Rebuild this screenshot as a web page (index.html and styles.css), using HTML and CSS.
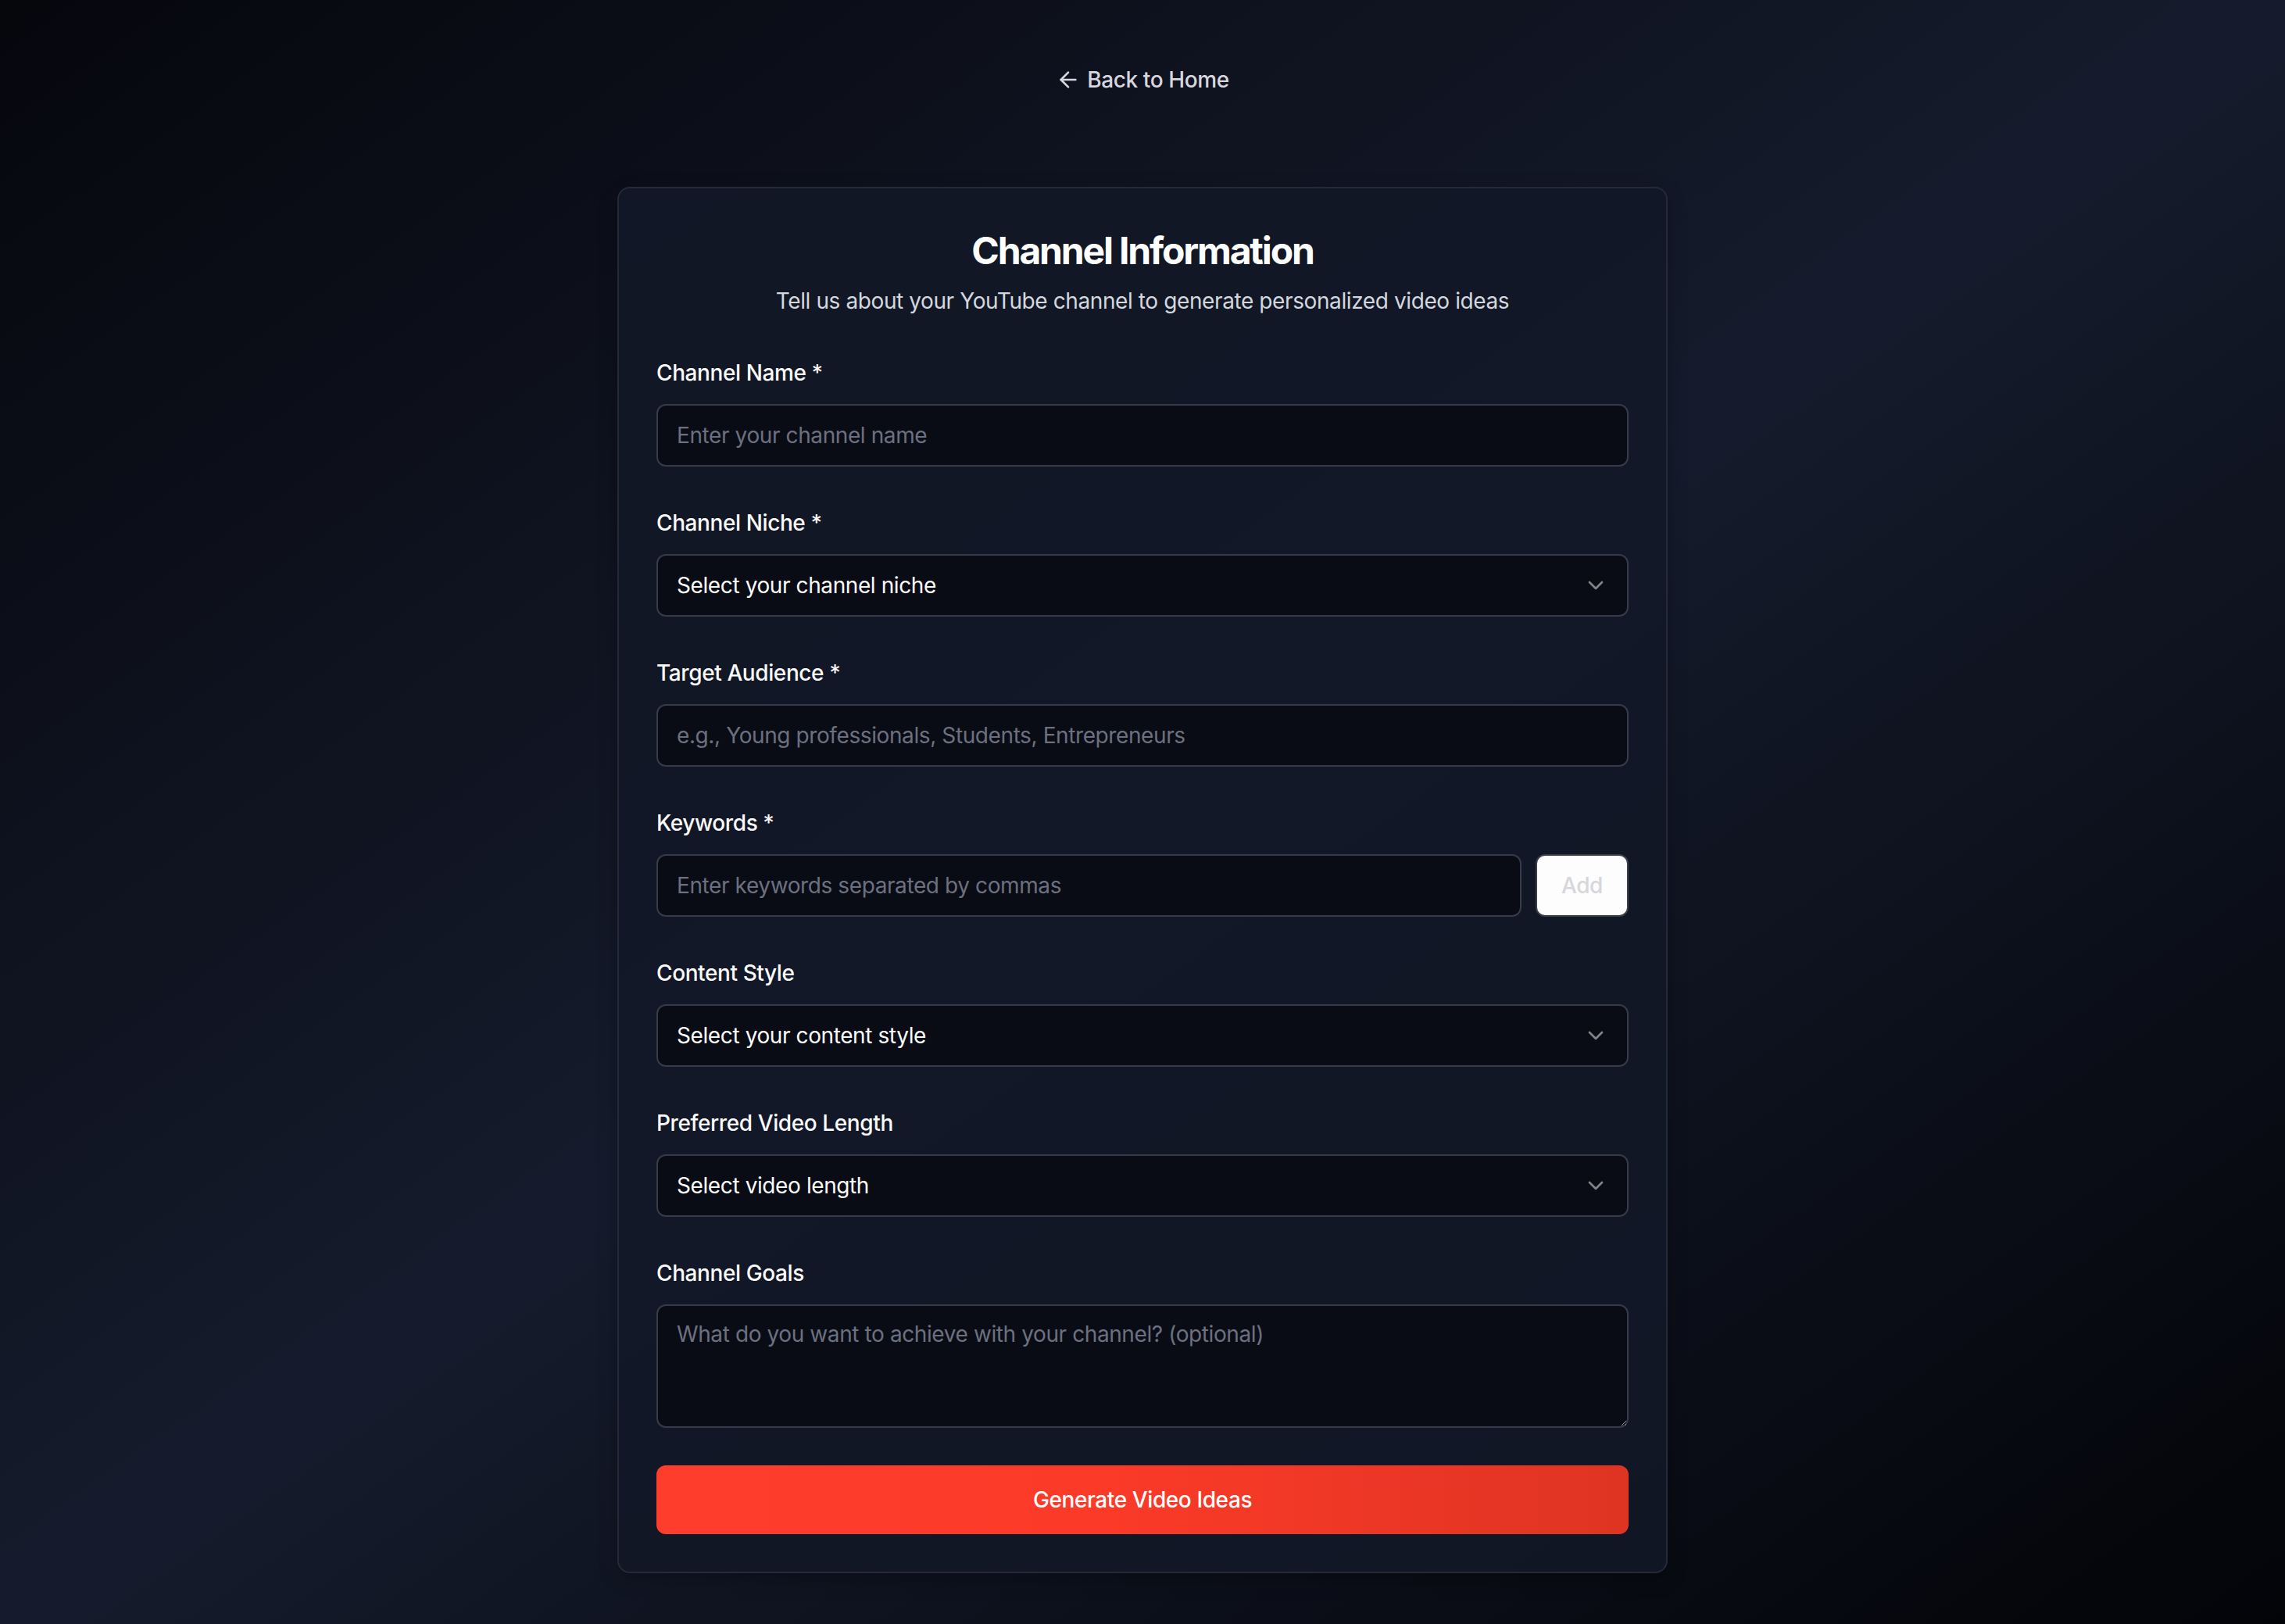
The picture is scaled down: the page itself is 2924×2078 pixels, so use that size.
FILE: index.html
```html
<!DOCTYPE html>
<html lang="en">
<head>
    <meta charset="UTF-8">
    <meta name="viewport" content="width=device-width, initial-scale=1.0">
    <title>Channel Information</title>
    <link rel="stylesheet" href="styles.css">
</head>
<body>
    <div class="page">
        <a class="back-link" href="#">
            <svg class="back-icon" viewBox="0 0 24 24" fill="none" stroke="currentColor" stroke-width="2" stroke-linecap="round" stroke-linejoin="round">
                <path d="m12 19-7-7 7-7"/>
                <path d="M19 12H5"/>
            </svg>
            Back to Home
        </a>

        <div class="card">
            <div class="card-header">
                <h1 class="card-title">Channel Information</h1>
                <p class="card-desc">Tell us about your YouTube channel to generate personalized video ideas</p>
            </div>

            <form class="form" onsubmit="return false">
                <div class="field">
                    <label class="label" for="channelName">Channel Name *</label>
                    <input class="input" id="channelName" placeholder="Enter your channel name">
                </div>

                <div class="field">
                    <label class="label">Channel Niche *</label>
                    <button type="button" class="input select">
                        <span>Select your channel niche</span>
                        <svg class="chevron" viewBox="0 0 24 24" fill="none" stroke="currentColor" stroke-width="2" stroke-linecap="round" stroke-linejoin="round"><path d="m6 9 6 6 6-6"/></svg>
                    </button>
                </div>

                <div class="field">
                    <label class="label" for="audience">Target Audience *</label>
                    <input class="input" id="audience" placeholder="e.g., Young professionals, Students, Entrepreneurs">
                </div>

                <div class="field">
                    <label class="label" for="keywords">Keywords *</label>
                    <div class="keyword-row">
                        <input class="input" id="keywords" placeholder="Enter keywords separated by commas">
                        <button type="button" class="add-btn" disabled>Add</button>
                    </div>
                </div>

                <div class="field">
                    <label class="label">Content Style</label>
                    <button type="button" class="input select">
                        <span>Select your content style</span>
                        <svg class="chevron" viewBox="0 0 24 24" fill="none" stroke="currentColor" stroke-width="2" stroke-linecap="round" stroke-linejoin="round"><path d="m6 9 6 6 6-6"/></svg>
                    </button>
                </div>

                <div class="field">
                    <label class="label">Preferred Video Length</label>
                    <button type="button" class="input select">
                        <span>Select video length</span>
                        <svg class="chevron" viewBox="0 0 24 24" fill="none" stroke="currentColor" stroke-width="2" stroke-linecap="round" stroke-linejoin="round"><path d="m6 9 6 6 6-6"/></svg>
                    </button>
                </div>

                <div class="field">
                    <label class="label" for="goals">Channel Goals</label>
                    <textarea class="input textarea" id="goals" placeholder="What do you want to achieve with your channel? (optional)"></textarea>
                </div>

                <button type="submit" class="submit-btn">Generate Video Ideas</button>
            </form>
        </div>
    </div>
</body>
</html>
```

FILE: styles.css
```css
* {
    box-sizing: border-box;
}
body {
    margin: 0;
    min-height: 100vh;
    font-family: Inter, "Noto Sans", "Liberation Sans", sans-serif;
    letter-spacing: -0.4px;
    background: linear-gradient(to bottom right, #06070d 0%, #151b2c 50%, #030408 100%);
    color: #fafafa;
}
.page {
    display: flex;
    flex-direction: column;
    align-items: center;
    padding: 82px 0 64px;
}
.back-link {
    display: inline-flex;
    align-items: center;
    gap: 8px;
    margin-bottom: 117px;
    font-size: 28px;
    line-height: 40px;
    font-weight: 500;
    color: #d6d6de;
    text-decoration: none;
}
.back-icon {
    width: 32px;
    height: 32px;
}
.card {
    width: 1344px;
    padding: 48px;
    border: 2px solid #242a39;
    border-radius: 16px;
    background: rgba(18, 24, 39, 0.92);
    box-shadow: 0 8px 24px rgba(0, 0, 0, 0.25);
}
.card-header {
    text-align: center;
    margin-bottom: 52px;
}
.card-title {
    margin: 0;
    font-size: 48px;
    line-height: 64px;
    font-weight: 700;
    letter-spacing: -0.045em;
    color: #ffffff;
}
.card-desc {
    margin: 12px 0 0;
    font-size: 28px;
    line-height: 40px;
    color: #d4d7de;
}
.form {
    display: flex;
    flex-direction: column;
    gap: 52px;
}
.field {
    display: flex;
    flex-direction: column;
}
.label {
    margin-bottom: 20px;
    font-size: 28px;
    line-height: 40px;
    font-weight: 500;
    color: #fafafa;
}
.input {
    width: 100%;
    height: 80px;
    padding: 0 24px;
    border: 2px solid #363b4a;
    border-radius: 12px;
    background: #0a0c15;
    font-family: inherit;
    font-size: 28px;
    letter-spacing: -0.4px;
    color: #fafafa;
    outline: none;
}
.input::placeholder {
    color: #6c7080;
}
.select {
    display: flex;
    align-items: center;
    justify-content: space-between;
    text-align: left;
    cursor: pointer;
}
.chevron {
    width: 32px;
    height: 32px;
    opacity: 0.5;
}
.textarea {
    height: 158px;
    padding: 16px 24px;
    line-height: 40px;
    resize: vertical;
}
.keyword-row {
    display: flex;
    gap: 18px;
}
.keyword-row .input {
    flex: 1;
}
.add-btn {
    width: 119px;
    height: 80px;
    flex-shrink: 0;
    border: 2px solid #3a3d4a;
    border-radius: 12px;
    background: #fdfdfe;
    font-family: inherit;
    font-size: 28px;
    font-weight: 500;
    letter-spacing: -0.4px;
    color: #d6d6db;
}
.submit-btn {
    height: 88px;
    margin-top: -4px;
    border: none;
    border-radius: 12px;
    background: linear-gradient(to right, #ff3d2d 0%, #fc3a28 45%, #df3423 100%);
    font-family: inherit;
    font-size: 28px;
    font-weight: 500;
    letter-spacing: -0.4px;
    color: #ffffff;
    cursor: pointer;
}
```
